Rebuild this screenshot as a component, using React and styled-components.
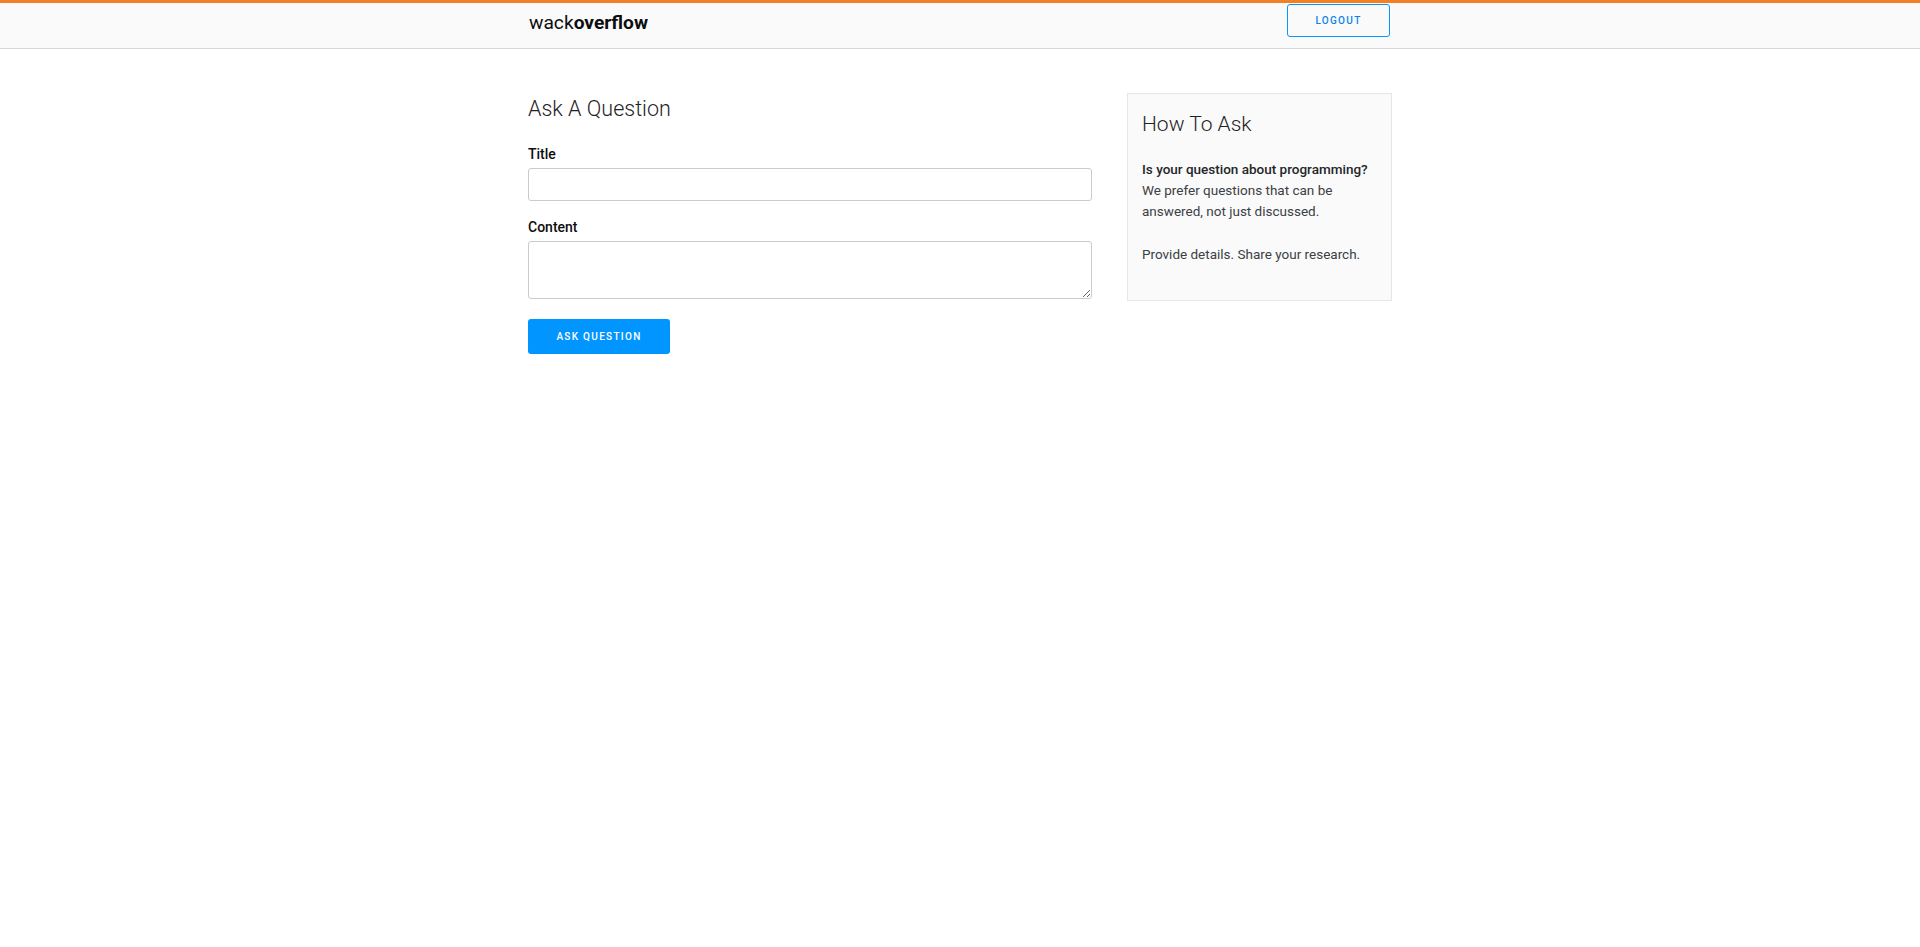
import React from "react";
import styled, { createGlobalStyle } from "styled-components";

const GlobalStyle = createGlobalStyle`
  * { box-sizing: border-box; }
  body {
    margin: 0;
    background: #ffffff;
    font-family: Roboto, "Liberation Sans", Arial, sans-serif;
    color: #242729;
  }
`;

const Header = styled.header`
  height: 49px;
  background: #fafafa;
  border-top: 3px solid #f48024;
  border-bottom: 1px solid #d6d9dc;
`;

const HeaderInner = styled.div`
  width: 864px;
  height: 45px;
  margin: 0 auto;
  display: flex;
  justify-content: space-between;
  align-items: flex-start;
`;

const Logo = styled.div`
  margin-top: 8px;
  font-size: 19.2px;
  line-height: 24px;
  color: #0c0d0e;
  padding-left: 1px;

  b {
    font-weight: 700;
  }
`;

const OutlineButton = styled.button`
  margin-top: 1px;
  margin-right: 2px;
  width: 103px;
  height: 33px;
  background: transparent;
  border: 1px solid #0a95ff;
  border-radius: 3px;
  color: #0a84e6;
  font-family: Roboto, "Liberation Sans", Arial, sans-serif;
  font-size: 10px;
  font-weight: 500;
  letter-spacing: 1.3px;
  text-transform: uppercase;
  cursor: pointer;
`;

const Main = styled.main`
  width: 864px;
  margin: 0 auto;
  padding-top: 44px;
  display: flex;
  align-items: flex-start;
  gap: 35px;
`;

const FormColumn = styled.form`
  width: 564px;
  display: flex;
  flex-direction: column;
`;

const PageTitle = styled.h1`
  margin: 0 0 19px;
  font-size: 21.5px;
  line-height: 32px;
  font-weight: 300;
  color: #1f2224;
`;

const Field = styled.div`
  display: flex;
  flex-direction: column;
  margin-bottom: ${(p) => p.$gap || 15}px;
`;

const Label = styled.label`
  font-size: 14px;
  line-height: 20px;
  font-weight: 500;
  color: #0c0d0e;
  margin-bottom: 4px;
`;

const TextInput = styled.input`
  width: 100%;
  height: 33px;
  border: 1px solid #c8ccd0;
  border-radius: 3px;
  padding: 0 9px;
  font-family: inherit;
  font-size: 13px;
  outline: none;
`;

const TextArea = styled.textarea`
  width: 100%;
  height: 58px;
  border: 1px solid #c8ccd0;
  border-radius: 3px;
  padding: 8px 9px;
  font-family: inherit;
  font-size: 13px;
  outline: none;
`;

const SubmitButton = styled.button`
  align-self: flex-start;
  width: 142px;
  height: 35px;
  border: none;
  border-radius: 3px;
  background: #0095ff;
  color: #ffffff;
  font-family: Roboto, "Liberation Sans", Arial, sans-serif;
  font-size: 10px;
  font-weight: 500;
  letter-spacing: 1.3px;
  text-transform: uppercase;
  cursor: pointer;
`;

const Sidebar = styled.aside`
  width: 265px;
  height: 208px;
  background: #fafafa;
  border: 1px solid #e4e6e8;
  padding: 18px 14px 0;
`;

const SideTitle = styled.h2`
  margin: 0 0 23px;
  font-size: 21px;
  line-height: 24px;
  font-weight: 300;
  color: #1f2224;
`;

const SideText = styled.p`
  margin: 0;
  font-size: 13.5px;
  line-height: 21px;
  color: #3b4045;

  & + & {
    margin-top: 22px;
  }

  b {
    font-weight: 500;
    color: #232629;
  }
`;

export default function App() {
  return (
    <>
      <GlobalStyle />
      <Header>
        <HeaderInner>
          <Logo>
            wack<b>overflow</b>
          </Logo>
          <OutlineButton type="button">Logout</OutlineButton>
        </HeaderInner>
      </Header>
      <Main>
        <FormColumn onSubmit={(e) => e.preventDefault()}>
          <PageTitle>Ask A Question</PageTitle>
          <Field $gap={16}>
            <Label htmlFor="title">Title</Label>
            <TextInput id="title" type="text" />
          </Field>
          <Field $gap={20}>
            <Label htmlFor="content">Content</Label>
            <TextArea id="content" />
          </Field>
          <SubmitButton type="submit">Ask Question</SubmitButton>
        </FormColumn>
        <Sidebar>
          <SideTitle>How To Ask</SideTitle>
          <SideText>
            <b>Is your question about programming?</b>
            <br />
            We prefer questions that can be answered, not just discussed.
          </SideText>
          <SideText>Provide details. Share your research.</SideText>
        </Sidebar>
      </Main>
    </>
  );
}
